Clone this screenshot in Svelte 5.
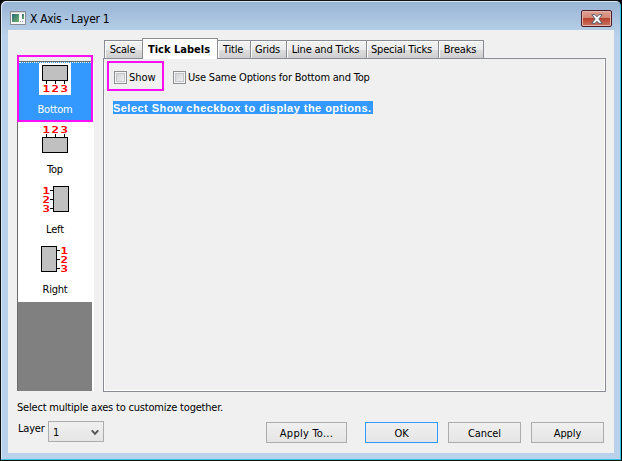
<script>
  const tabs = [
    { label: 'Scale', width: 38 },
    { label: 'Tick Labels', width: 76, active: true },
    { label: 'Title', width: 33 },
    { label: 'Grids', width: 36 },
    { label: 'Line and Ticks', width: 80 },
    { label: 'Special Ticks', width: 72 },
    { label: 'Breaks', width: 45 }
  ];
  const axes = [
    { name: 'Bottom', rect: [3.5, 2.5, 25, 15], ticks: 'M7.5 18v3M16.5 18v3M25.5 18v3', digits: [[3.5, 29], [12.5, 29], [21.5, 29]] },
    { name: 'Top', rect: [3.5, 14.5, 25, 15], ticks: 'M7.5 11v3M16.5 11v3M25.5 11v3', digits: [[3.5, 10], [12.5, 10], [21.5, 10]] },
    { name: 'Left', rect: [14.5, 3.5, 15, 25], ticks: 'M11 7.5h3M11 16.5h3M11 25.5h3', digits: [[3.5, 11], [3.5, 20], [3.5, 29]] },
    { name: 'Right', rect: [2.5, 3.5, 15, 25], ticks: 'M18 7.5h3M18 16.5h3M18 25.5h3', digits: [[21.5, 11], [21.5, 20], [21.5, 29]] }
  ];
</script>

<div class="window">
  <header>
    <svg class="app" width="16" height="14" viewBox="0 0 16 14">
      <defs><linearGradient id="g" x2="1" y2="1"><stop stop-color="#286878" /><stop offset="1" stop-color="#72b468" /></linearGradient></defs>
      <rect x=".5" y=".5" width="15" height="13" fill="#f8f8f8" stroke="#858b91" />
      <path d="M1 1.5h14" stroke="#d4d4d4" />
      <rect x="2" y="3" width="7" height="8" fill="url(#g)" />
      <rect x="12" y="3" width="2" height="5" fill="url(#g)" />
      <path d="M10 10.5h1m1 0h1" stroke="#999" />
    </svg>
    <span class="title">X Axis - Layer 1</span>
    <button class="close" aria-label="Close">
      <svg width="12" height="10" viewBox="0 0 12 10">
        <path d="M.8.7h3.4L6 2.8 7.8.7h3.4L7.8 5l3.4 4.3H7.8L6 7.2 4.2 9.3H.8L4.2 5z" fill="#fff" stroke="#566070" />
      </svg>
    </button>
  </header>
  <main>
    <div class="upper">
      <div class="axes">
        {#each axes as a, i}
          <div class="axis" class:selected={i === 0}>
            <svg width="32" height="32" viewBox="0 0 32 32">
              <rect width="32" height="32" fill="#fff" />
              <rect x={a.rect[0]} y={a.rect[1]} width={a.rect[2]} height={a.rect[3]} fill="#c0c0c0" stroke="#000" />
              <path d={a.ticks} stroke="#000" />
              {#each a.digits as d, n}
                <text x={d[0]} y={d[1]} textLength="7.5" lengthAdjust="spacingAndGlyphs">{n + 1}</text>
              {/each}
            </svg>
            <span>{a.name}</span>
          </div>
        {/each}
        <div class="mark axis-mark"></div>
      </div>
      <div class="tabbed">
        <nav>
          {#each tabs as t}
            <div class="tab" class:active={t.active} style:width="{t.width}px"><span>{t.label}</span></div>
          {/each}
        </nav>
        <section>
          <div class="checks">
            <div class="check"><i></i><span class="show">Show</span><div class="mark show-mark"></div></div>
            <div class="check"><i></i><span class="same">Use Same Options for Bottom and Top</span></div>
          </div>
          <div class="hint"><span>Select Show checkbox to display the options.</span></div>
        </section>
      </div>
    </div>
    <p><span>Select multiple axes to customize together.</span></p>
    <footer>
      <span class="layer">Layer</span>
      <div class="combo"><span>1</span><svg width="8" height="7" viewBox="0 0 8 7"><path d="M.8 1.3 4 4.8l3.2-3.5" fill="none" stroke="#555" stroke-width="2" /></svg></div>
      <button class="to"><span>Apply To...</span></button>
      <button class="ok"><span>OK</span></button>
      <button><span>Cancel</span></button>
      <button><span>Apply</span></button>
    </footer>
  </main>
</div>

<style>
  :global(body) { background: #000; overflow: hidden; }
  .window, .window * { box-sizing: border-box; }
  .window {
    width: 622px; height: 461px; padding: 0 6px 6px;
    background: linear-gradient(#98b4d4, #b9d1ea 34px);
    border: 1px solid #111; border-right-color: #000;
    border-radius: 6px 6px 0 0;
    box-shadow: inset -1px -1px #32c5e3, inset 1px 1px #d9e8f6;
    font: 11px/13px "DejaVu Sans Condensed", "DejaVu Sans", sans-serif;
    font-stretch: condensed; letter-spacing: -.2px;
    color: #000; white-space: nowrap;
  }
  header { height: 29px; display: flex; padding-left: 3px; }
  .app { margin-top: 10px; }
  .title { font-size: 12px; line-height: 16px; margin: 10px 0 0 4px; letter-spacing: -.32px; }
  .close {
    width: 31px; height: 17px; margin: 9px 3px 0 auto; padding: 0;
    border: 1px solid #4b1c27; border-radius: 2px;
    background: linear-gradient(#dfa193, #d28674 48%, #b9412d 50%, #c87666);
    box-shadow: inset 0 0 0 1px #e5b5aa;
    display: flex; align-items: center; justify-content: center;
  }
  main { height: 423px; margin: 0 1px; background: #f0f0f0; display: flex; flex-direction: column; }
  .upper { height: 362px; display: flex; padding: 8px 8px 0; }
  .axes {
    position: relative; width: 77px; height: 330px; margin: 23px 9px 0 1px;
    background: #808080; border: 1px solid #6c6c6c;
    border-right: 2px solid #fff; border-bottom: 0;
  }
  .axis { height: 60px; background: #fff; display: flex; flex-direction: column; align-items: center; padding-top: 1px; }
  .axis span { margin-top: 8px; }
  .axis.selected { background: #3399ff; color: #fff; }
  .axis text { font: bold 9.5px "DejaVu Sans Mono", monospace; letter-spacing: 0; fill: #f00; }
  .mark { position: absolute; border: 2px solid #fb10f3; pointer-events: none; }
  .axis-mark { left: -1px; top: -7px; width: 76px; height: 67px; }
  .axis-mark::after { content: ""; position: absolute; inset: 5px 0 0; border-top: 1px dotted #fff; }
  .tabbed { width: 503px; }
  nav { height: 20px; display: flex; align-items: flex-end; padding-left: 1px; }
  .tab {
    height: 18px; border: 1px solid #898c95; border-bottom: 0; border-left-width: 0;
    background: linear-gradient(#f2f2f2, #ebebeb 50%, #dedede 51%, #cfcfcf);
    box-shadow: inset 1px 1px #fff; text-align: center; padding: 2px 2px 0 0; flex: none;
  }
  .tab:first-child { border-left-width: 1px; border-right-width: 0; }
  .tab.active { height: 21px; margin-bottom: -1px; padding-top: 4px; background: #fff; font-weight: bold; letter-spacing: 0; position: relative; border-left-width: 1px; }
  section { height: 334px; border: 1px solid #898c95; box-shadow: inset 1px 0 #fff, inset -1px -1px #fff; padding: 10px 0 0 9px; }
  .checks { display: flex; height: 16px; padding-left: 1px; }
  .check { position: relative; display: flex; gap: 2px; align-items: center; width: 59px; }
  .check i { width: 13px; height: 13px; flex: none; border: 1px solid #8e8f8f; background: linear-gradient(135deg, #c9ccd0, #f6f6f6); box-shadow: inset 0 0 0 1px #f4f4f4, inset 0 0 0 2px #c4c8cc; }
  .show { letter-spacing: 0; }
  .show-mark { left: -7px; top: -8px; width: 57px; height: 30px; }
  .hint { margin-top: 16px; width: 260px; height: 13px; background: #3399ff; color: #fff; font: bold 11px/14px "Liberation Sans", sans-serif; letter-spacing: .46px; }
  p { margin: 9px 0 0 9px; height: 13px; }
  footer { display: flex; padding: 7px 10px 0 10px; }
  .layer { margin-top: 1px; width: 30px; flex: none; }
  .combo { width: 56px; height: 21px; border: 1px solid #acacac; background: linear-gradient(#f0f0f0, #e5e5e5); display: flex; align-items: center; justify-content: space-between; padding: 1px 4px 0; margin-right: 162px; flex: none; }
  footer button { width: 73px; height: 21px; margin: 1px 0 0 10px; border: 1px solid #acacac; background: linear-gradient(#f0f0f0, #e5e5e5); font: inherit; letter-spacing: -.1px; padding: 1px 0 0; color: #000; flex: none; }
  footer .to { width: 81px; margin-left: 0; letter-spacing: .25px; }
  footer .ok { margin-left: 18px; border-color: #3399ff; }
</style>
